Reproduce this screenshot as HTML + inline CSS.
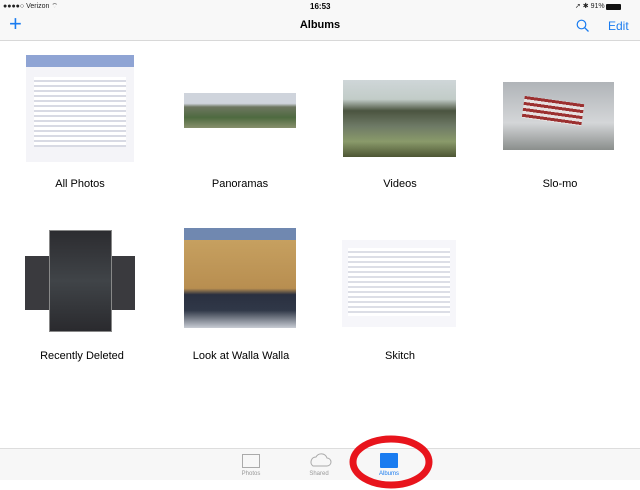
<!DOCTYPE html>
<html><head><style>
*{margin:0;padding:0;box-sizing:border-box}
body{width:640px;height:490px;background:#fff;font-family:"Liberation Sans",sans-serif;position:relative;overflow:hidden;color:#000}
.a{position:absolute}
.lbl{position:absolute;font-size:11px;text-align:center;width:160px}
.blue{color:#1a7cf0}
</style></head><body>
<div class="a" style="left:0;top:0;width:640px;height:41px;background:#f8f8f8;border-bottom:1px solid #d8d8d8"></div>
<div class="a" style="left:3px;top:2px;font-size:7px;color:#222">●●●●○ Verizon ︎<span style="font-size:7px">⌔</span></div>
<div class="a" style="left:310px;top:2px;font-size:8px;font-weight:bold;">16:53</div>
<div class="a" style="left:575px;top:2px;font-size:7px;color:#222">➚ ✱ 91%</div>
<div class="a" style="left:606px;top:4px;width:15px;height:6px;background:#111;border-radius:1px"></div>
<div class="a blue" style="left:9px;top:13px;font-size:22px;line-height:22px;font-weight:300">+</div>
<div class="a" style="left:0;width:640px;top:19px;text-align:center;font-size:11px;font-weight:bold">Albums</div>
<svg class="a" style="left:576px;top:19px" width="14" height="14"><circle cx="5.5" cy="5.5" r="4.3" fill="none" stroke="#1a7cf0" stroke-width="1.2"/><line x1="8.7" y1="8.7" x2="12.5" y2="12.5" stroke="#1a7cf0" stroke-width="1.3"/></svg>
<div class="a blue" style="left:608px;top:19px;font-size:12px">Edit</div>

<!-- row 1 -->
<div class="a" style="left:26px;top:55px;width:108px;height:107px;background:#f4f4f8;border-top:12px solid #8fa4d4"><div style="margin:10px 8px;height:70px;background:repeating-linear-gradient(#fff 0 3px,#d8dae4 3px 5px)"></div></div>
<div class="a" style="left:184px;top:93px;width:112px;height:35px;background:linear-gradient(#cfd4dc 0,#cfd4dc 30%,#6d7660 40%,#4e6a40 70%,#87906c 100%)"></div>
<div class="a" style="left:343px;top:80px;width:113px;height:77px;background:linear-gradient(#cfd6d8 0,#c2ccc8 25%,#4b5440 40%,#6e7a66 60%,#8a9a6a 80%,#4d5634 100%)"></div>
<div class="a" style="left:503px;top:82px;width:111px;height:68px;background:linear-gradient(#b0b4b8,#d4d6d8 60%,#8a8e8c)"><div style="margin:18px 0 0 20px;width:60px;height:22px;background:repeating-linear-gradient(#9c3030 0 3px,#e6e0e0 3px 6px);transform:rotate(8deg)"></div></div>
<div class="lbl" style="left:0;top:178px">All Photos</div>
<div class="lbl" style="left:160px;top:178px">Panoramas</div>
<div class="lbl" style="left:320px;top:178px">Videos</div>
<div class="lbl" style="left:480px;top:178px">Slo-mo</div>

<!-- row 2 -->
<div class="a" style="left:25px;top:256px;width:110px;height:54px;background:#3a3a3e"></div>
<div class="a" style="left:49px;top:230px;width:63px;height:102px;background:linear-gradient(#2c2c30,#404448 50%,#2a2a2e);border:1px solid #888"></div>
<div class="a" style="left:184px;top:228px;width:112px;height:12px;background:#7088b0"></div>
<div class="a" style="left:184px;top:240px;width:112px;height:88px;background:linear-gradient(#c6a060 0,#b88e50 55%,#2a3040 62%,#303848 80%,#c8ccd4 100%)"></div>
<div class="a" style="left:342px;top:240px;width:114px;height:87px;background:#f6f6fa"><div style="margin:8px 6px;height:68px;background:repeating-linear-gradient(#fff 0 3px,#dcdee6 3px 5px)"></div></div>
<div class="lbl" style="left:2px;top:350px">Recently Deleted</div>
<div class="lbl" style="left:161px;top:350px">Look at Walla Walla</div>
<div class="lbl" style="left:320px;top:350px">Skitch</div>

<!-- tab bar -->
<div class="a" style="left:0;top:448px;width:640px;height:32px;background:#f7f7f7;border-top:1px solid #ddd"></div>
<div class="a" style="left:242px;top:454px;width:18px;height:14px;border:1px solid #aaa"></div>
<div class="a" style="left:230px;top:471px;width:42px;text-align:center;font-size:6px;color:#999">Photos</div>
<svg class="a" style="left:308px;top:452px" width="24" height="16"><path d="M5 14 H19 A4 4 0 0 0 19 6 A6 6 0 0 0 8 5 A5 5 0 0 0 5 14Z" fill="none" stroke="#aaa" stroke-width="1"/></svg>
<div class="a" style="left:298px;top:471px;width:42px;text-align:center;font-size:6px;color:#999">Shared</div>
<div class="a" style="left:380px;top:453px;width:18px;height:15px;background:#1a7cf0;border-radius:1px"></div>
<div class="a" style="left:368px;top:471px;width:42px;text-align:center;font-size:6px;color:#1a7cf0">Albums</div>
<svg class="a" style="left:0;top:0" width="640" height="490"><ellipse cx="391" cy="462" rx="38" ry="23" fill="none" stroke="#e8141c" stroke-width="7"/></svg>
</body></html>
